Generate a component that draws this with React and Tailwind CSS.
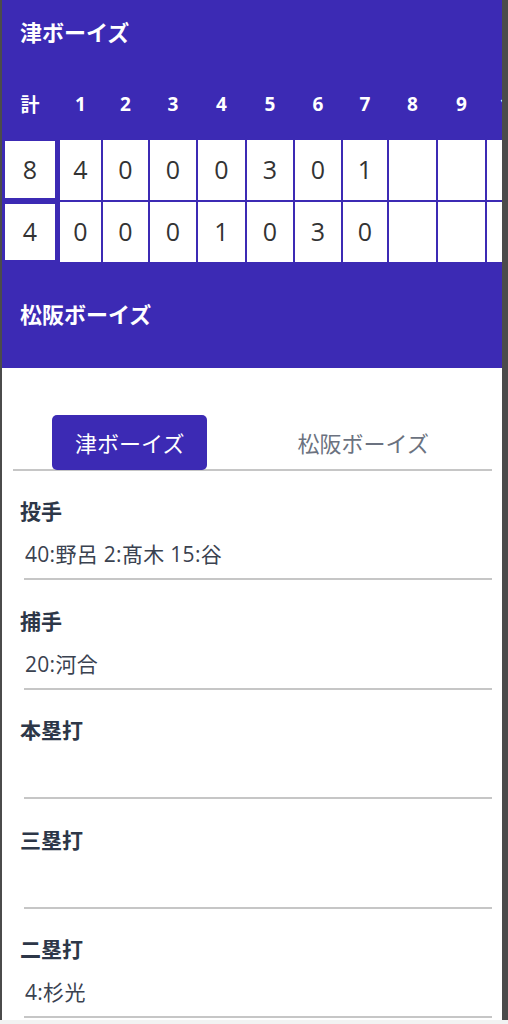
import React from "react";

const font = { fontFamily: '"Noto Sans CJK JP", "Noto Sans", sans-serif' };
const digitFont = { fontFamily: '"Open Sans", "Noto Sans CJK JP", sans-serif' };

const widths = ["w-[41px]", "w-[45px]", "w-[46px]", "w-[47px]", "w-[46px]", "w-[46px]", "w-[44px]", "w-[47px]", "w-[47px]", "w-[47px]"];
const labels = ["1", "2", "3", "4", "5", "6", "7", "8", "9", "10"];
const top = ["4", "0", "0", "0", "3", "0", "1", "", "", ""];
const bottom = ["0", "0", "0", "1", "0", "3", "0", "", "", ""];

const sections = [
  { title: "投手", value: "40:野呂 2:髙木 15:谷", pt: "pt-[25px]" },
  { title: "捕手", value: "20:河合", pt: "pt-[26px]" },
  { title: "本塁打", value: "", pt: "pt-[25px]" },
  { title: "三塁打", value: "", pt: "pt-[26px]" },
  { title: "二塁打", value: "4:杉光", pt: "pt-[25px]" },
];

export default function App() {
  return (
    <div className="w-[508px] h-[1024px] overflow-hidden bg-[#4b4b4b] flex flex-col" style={font}>
      <div className="flex h-[1020px] shrink-0">
        <div className="w-[2px] shrink-0" />
        <div className="w-[500px] shrink-0 bg-white overflow-hidden flex flex-col">
          {/* Scoreboard header */}
          <div className="shrink-0 bg-[#3c2ab4] text-white pt-[16px] pb-[40px] overflow-hidden">
            <div className="pl-[18px] text-[22px] font-bold leading-[30px]">津ボーイズ</div>
            <div className="flex mt-[44px] pl-[3px]" style={digitFont}>
              <div className="w-[50px] shrink-0 flex flex-col">
                <div className="h-[28px] leading-[28px] text-center text-[19px] font-bold" style={font}>計</div>
                <div className="mt-[23px] h-[57px] bg-white text-[#333] text-[25px] flex items-center justify-center">8</div>
                <div className="mt-[6px] h-[56px] bg-white text-[#333] text-[25px] flex items-center justify-center">4</div>
              </div>
              <div className="ml-[5px] flex gap-[2px] shrink-0">
                {labels.map((l, i) => (
                  <div key={l} className={`${widths[i]} shrink-0 flex flex-col`}>
                    <div className="h-[28px] leading-[28px] text-center text-[19px] font-bold whitespace-nowrap">{l}</div>
                    <div className="mt-[22px] h-[60px] bg-white text-[#333] text-[25px] flex items-center justify-center">{top[i]}</div>
                    <div className="mt-[2px] h-[60px] bg-white text-[#333] text-[25px] flex items-center justify-center">{bottom[i]}</div>
                  </div>
                ))}
              </div>
            </div>
            <div className="pl-[18px] mt-[36px] text-[22px] font-bold leading-[30px]">松阪ボーイズ</div>
          </div>

          {/* Tabs */}
          <div className="shrink-0 mt-[47px] ml-[11px] mr-[10px] border-b-2 border-[#c6c6c6] grid grid-cols-2 pr-[12px]">
            <div className="flex justify-center">
              <div className="w-[155px] h-[55px] -mb-[1px] bg-[#3c2ab4] rounded-[5px] text-white text-[22px] flex items-center justify-center">津ボーイズ</div>
            </div>
            <div className="flex justify-center items-center text-[22px] text-[#6b7280]">松阪ボーイズ</div>
          </div>

          {/* Sections */}
          <div className="shrink-0 flex flex-col">
            {sections.map((s) => (
              <div key={s.title} className={`pl-[18px] pr-[10px] ${s.pt}`}>
                <div className="h-[28px] leading-[28px] text-[21px] font-bold text-[#2d3748]">{s.title}</div>
                <div className="ml-[4px] mt-[16px] pb-[10px] border-b-2 border-[#c6c6c6]">
                  <div className="h-[28px] leading-[28px] text-[21px] tracking-[0.3px] text-[#3a4250] pl-[1px]" style={digitFont}>{s.value}</div>
                </div>
              </div>
            ))}
          </div>
        </div>
        <div className="flex-1" />
      </div>
      <div className="h-[4px] bg-[#f2f2f2]" />
    </div>
  );
}
